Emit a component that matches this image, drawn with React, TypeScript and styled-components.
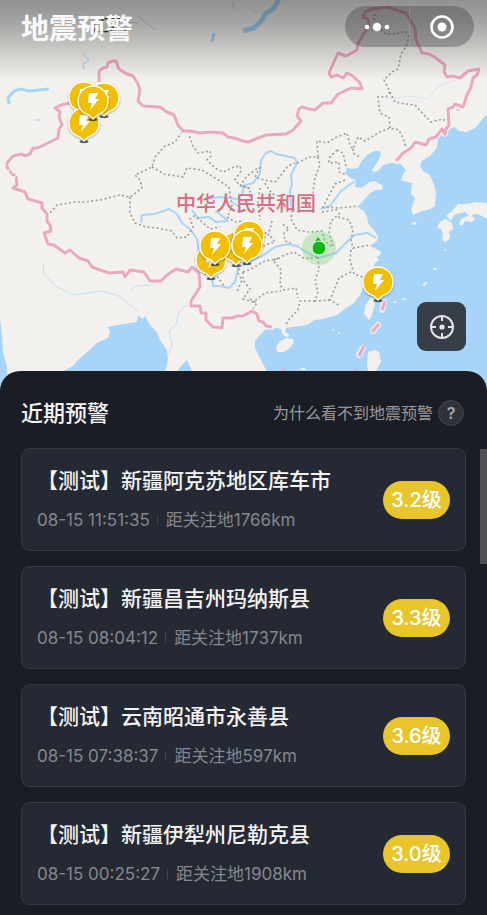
import React from "react";
import styled, { createGlobalStyle } from "styled-components";

const GlobalStyle = createGlobalStyle`
  * { box-sizing: border-box; }
  html, body { margin: 0; background: #1a1d24; }
  body { font-family: Inter, "Noto Sans CJK SC", sans-serif; }
  button, a { font: inherit; color: inherit; text-decoration: none; }
  button { border: 0; padding: 0; background: none; cursor: pointer; }
`;

const Page = styled.main`
  min-height: 100vh;
  display: flex;
  flex-direction: column;
  overflow: hidden;
`;

const MapArea = styled.section`
  position: relative;
  height: 391px;
  overflow: hidden;
  background: #f2f1ee;
`;

const MapDrawing = styled.svg`
  display: block;
  width: 100%;
  height: 400px;
`;

const TopBar = styled.header`
  position: absolute;
  inset: 0 0 auto;
  height: 80px;
  padding: 6px 13px 0 21px;
  display: flex;
  align-items: flex-start;
  justify-content: space-between;
  background: linear-gradient(rgba(0, 0, 0, 0.4), rgba(0, 0, 0, 0.31) 30%, rgba(0, 0, 0, 0));
`;

const AppTitle = styled.h1`
  margin: 3px 0 0;
  color: #fafafa;
  font-size: 28px;
  line-height: 40px;
  font-weight: 700;
`;

const Capsule = styled.div`
  width: 129px;
  height: 41px;
  display: flex;
  border-radius: 21px;
  background: rgba(60, 60, 60, 0.36);
`;

const CapsuleButton = styled.button`
  flex: 1;
  display: grid;
  place-items: center;
  & + & { border-left: 1px solid rgba(255, 255, 255, 0.12); }
`;

const LocateButton = styled.button`
  position: absolute;
  right: 21px;
  top: 302px;
  width: 49px;
  height: 49px;
  display: grid;
  place-items: center;
  border-radius: 9px;
  background: #373e47;
`;

const Panel = styled.section`
  position: relative;
  flex: 1;
  margin-top: -20px;
  padding: 21px 21px 10px;
  border-radius: 20px 20px 0 0;
  background: #1a1d24;
`;

const ScrollThumb = styled.div`
  position: absolute;
  top: 78px;
  right: 0;
  width: 7px;
  height: 115px;
  background: #4e5055;
`;

const PanelHead = styled.div`
  display: flex;
  align-items: center;
  justify-content: space-between;
  height: 42px;
`;

const PanelTitle = styled.h2`
  margin: 0;
  color: #f4f4f5;
  font-size: 22px;
  line-height: 32px;
  font-weight: 500;
`;

const HelpLink = styled.a`
  display: flex;
  align-items: center;
  gap: 5px;
  margin-right: 2px;
  color: #97999d;
  font-size: 16px;
  line-height: 24px;
`;

const HelpMark = styled.span`
  width: 26px;
  height: 26px;
  display: grid;
  place-items: center;
  border: 1px solid #44474d;
  border-radius: 50%;
  background: #303339;
  color: #a5a7aa;
  font-weight: 600;
`;

const AlertList = styled.ul`
  list-style: none;
  margin: 14px 0 0;
  padding: 0;
  display: flex;
  flex-direction: column;
  gap: 15px;
`;

const AlertCard = styled.li`
  height: 103px;
  padding: 0 15px;
  display: flex;
  align-items: center;
  justify-content: space-between;
  border: 1px solid #363942;
  border-radius: 9px;
  background: #252934;
`;

const AlertText = styled.div`
  display: flex;
  flex-direction: column;
  gap: 10px;
`;

const Place = styled.h3`
  margin: 0;
  color: #f4f4f5;
  font-size: 21px;
  line-height: 30px;
  font-weight: 500;
`;

const Details = styled.div`
  display: flex;
  align-items: center;
  color: #85878c;
  font-size: 17px;
  line-height: 28px;
`;

const Divider = styled.span`
  width: 1px;
  height: 10px;
  margin: 0 8px 0 7px;
  background: #41454e;
`;

const Level = styled.span`
  width: 67px;
  height: 38px;
  display: grid;
  place-items: center;
  border-radius: 19px;
  background: #e9c52c;
  color: #fff;
  font-size: 20px;
  line-height: 28px;
  font-weight: 500;
`;

const alerts = [
  { place: "【测试】新疆阿克苏地区库车市", time: "08-15 11:51:35", distance: "距关注地1766km", level: "3.2级" },
  { place: "【测试】新疆昌吉州玛纳斯县", time: "08-15 08:04:12", distance: "距关注地1737km", level: "3.3级" },
  { place: "【测试】云南昭通市永善县", time: "08-15 07:38:37", distance: "距关注地597km", level: "3.6级" },
  { place: "【测试】新疆伊犁州尼勒克县", time: "08-15 00:25:27", distance: "距关注地1908km", level: "3.0级" },
];

const seas = [
  "M487 114L482 120 475 128 466 132 459 131 454 127 448 130 438 138 437 148 430 156 422 161 420 166 423 171 429 174 433 182 436 192 435 206 430 209 423 211 413 215 411 209 415 198 411 194 412 183 407 182 401 180 403 174 406 171 402 165 395 162 383 165 378 171 373 172 372 170 377 163 381 154 379 151 374 151 367 155 361 162 358 168 353 169 347 168 345 173 350 178 356 180 355 187 361 188 365 186 369 182 375 181 379 184 383 185 382 190 376 190 370 193 365 199 357 207 364 211 367 217 368 223 374 230 378 237 377 241 370 246 380 251 381 254 377 257 379 260 375 263 372 273 366 278 364 286 360 295 354 303 346 308 337 315 330 317 323 319 315 320 307 325 300 326 293 327 286 328 285 332 290 335 287 337 283 335 281 329 273 327 266 329 260 335 255 341 255 348 266 370 276 400H487Z",
  "M60 373L73 366 77 361 97 343 108 338 110 331 108 327 123 324 137 322 138 315 142 319 145 316 150 325 157 332 160 340 167 350 168 360 165 372V400H50Z",
  "M0 318L2 336 3 352 7 367V400H0Z",
  "M176 373L180 367 187 360 190 367 195 376 187 400Z",
];
const islands = [
  "M276 347L280 341 286 338 293 339 294 342 290 348 284 352 277 352Z",
  "M371 297L374 299 375 305 371 317 369 320 364 314 365 306Z",
  "M368 352L375 350 379 352 381 362 376 371 379 384 370 380 367 366Z",
  "M437 228L440 222 445 219 452 223 453 229 449 232 450 238 446 242 442 240 443 234 441 229Z",
  "M446 216L453 210 458 204 466 204 476 202 487 203V219L480 215 474 214 470 217 465 212 454 215 451 221Z",
  "M459 224L462 218 471 215 475 219 472 222 465 221 462 226Z",
  "M411 224L414 222 417 222 415 225Z",
];
const border = [
  "M99 82L99 71 103 68 107 67 108 63 113 61 116 61 119 69 125 73 133 76 138 84 140 90 138 101 143 106 160 107 167 112 174 115 178 125 183 131 190 131 200 133 211 132 223 133 228 137 234 138 243 141 248 142 266 135 286 134 293 130 301 121 297 116 299 109 302 107 309 109 315 110 323 103 331 103 338 94 351 88 362 89 360 83 353 76 347 73 343 78 337 75 331 77 329 73 338 53 346 56 357 50 358 44 369 25 368 19 363 17 365 12 372 9 388 7 399 11 406 13 410 20 415 28 416 40 422 53 429 54 436 58 445 65 444 72 447 77 453 76 460 78 468 71 479 69 477 75 473 78 471 87 467 95 463 107 455 104 453 107 448 109 449 125 446 129 445 134 442 129 436 137 429 139 426 145 415 142 411 148 403 153 396 161",
  "M70 103L61 105 55 108 60 112 59 117 62 125 59 129 58 138 38 148 33 148 30 154 25 156 22 154 13 156 7 163 7 167 11 173 16 177 17 185 13 188 25 192 28 199 42 203 42 208 47 214 47 221 50 225 51 231 44 233 48 244 54 245 65 253 70 250 79 258 88 261 92 267 100 270 109 273 123 272 125 277 130 270 144 272 150 281 161 281 167 275 176 269 188 272 192 267 199 273 200 287 191 301 191 306 200 306 201 313 206 313 206 320 213 327 222 328 223 318 232 318 237 316 243 316 252 311 257 314 259 321 263 322 266 326 272 327",
];
const provinces = [
  "M182 132L175 142 165 146 155 157 152 167 135 175 140 180 142 188 130 197 120 195 100 200 85 202 75 202 57 205 50 213",
  "M130 197L130 213 135 223 146 227 157 228 172 231 177 238 187 237 193 227 190 219 194 216 200 220 210 229 220 227",
  "M152 167L164 174 183 177 187 168 202 170 215 178 229 187 232 207 227 217 235 222 244 221",
  "M188 132L193 146 198 153 210 151 211 156 207 160 215 168 223 172 234 167 240 166 241 171 235 180 241 186 250 188",
  "M297 163L309 157 318 157 317 141 327 143 335 138 347 133 350 145 353 149 358 137 365 141 380 132 390 128 399 130 403 138 406 147",
  "M390 128L389 117 380 113 378 97 386 97 390 92 384 80 392 72 398 69 401 54 406 47 409 37 405 31 396 34 386 34 377 26 374 18 376 11",
  "M390 92L395 102 406 104 415 105 424 115 431 122 443 119 448 124",
  "M318 157L320 165 315 177 313 193M353 149L353 153 361 158",
  "M260 167L255 177 264 180 275 182 281 175 288 166 295 163",
  "M337 150L329 158 329 163 339 162 339 172 347 175M337 150L343 153 346 166M345 180L335 184 323 207 340 208 358 206",
  "M240 186L247 176 258 168M243 186L250 189 250 198M260 188L258 202 260 220M265 183L269 190 275 196",
  "M293 206L291 219 297 230 309 232 322 231 325 241 331 246M322 212L340 209M340 213L331 221 329 232 333 246M338 217L349 220 353 230 351 240 353 248 370 245",
  "M351 250L350 260 354 274 363 277M351 272L339 278 335 288 330 300 340 306",
  "M318 257L319 269 315 281 318 292 315 301 330 300M315 301L300 301 298 310 290 318 285 326",
  "M280 258L273 260 281 270 280 285 284 290 296 288 298 298M282 256L294 252 305 259 318 257",
  "M243 272L251 269 265 261 280 258M243 272L243 280 250 289 243 299 253 302 265 293 281 291M250 299L257 303 252 310",
  "M248 234L261 240 269 234 275 242 265 245 258 254 244 265M283 224L289 229 284 233 285 241 291 243M272 221L270 230 264 234M230 260L241 262 238 273 242 280 237 292M192 268L207 275 217 276 225 287",
];
const rivers = [
  "M141 223L142 215 155 214 169 209 177 214 182 223 191 230 197 239 199 255 205 270 212 278 213 286 220 286 229 288 235 282 238 268 247 263 262 256 275 247 288 244 297 246 306 252 318 258 336 253 345 244 354 235 368 233 376 238",
  "M243 193L243 186 253 183 260 174 261 160 266 153 271 151 276 154 295 158 297 163 291 175 292 184 290 191 291 207M321 209L330 206 341 191 355 181",
  "M192 210L198 218 209 217 216 222 228 221 220 214 215 211M210 199L219 197 238 199 244 191M232 202L241 208",
];

const pins = [
  [84, 97], [104, 98], [84, 123], [93, 101],
  [211, 260], [236, 247], [249, 236], [215, 246], [247, 245], [378, 282],
];

function Pin({ x, y }: { x: number; y: number }) {
  return (
    <g transform={`translate(${x} ${y})`}>
      <ellipse cx="0" cy="18.5" rx="4.5" ry="1.6" fill="#333e49" opacity=".8" />
      <path
        d="M0 18L-4 14C-11 12-15 7-15 0A15 15 0 0 1 15 0C15 7 11 12 4 14Z"
        fill="#f0bf06"
        stroke="#fffdf4"
        strokeWidth="1.3"
        filter="url(#pinShadow)"
      />
      <path d="M-4-8H5L2-2H6L-3 9-1 2H-5Z" fill="#fff" />
    </g>
  );
}

function MapPicture() {
  return (
    <MapDrawing viewBox="0 0 487 400" preserveAspectRatio="xMidYMin slice" role="img" aria-label="地震预警地图">
      <defs>
        <filter id="pinShadow" x="-30%" y="-30%" width="160%" height="170%">
          <feDropShadow dx="0" dy="1" stdDeviation="1" floodOpacity=".35" />
        </filter>
      </defs>
      <g fill="#a8d4f7">{seas.map((d) => <path key={d} d={d} />)}</g>
      <g fill="#f2f1ee">{islands.map((d) => <path key={d} d={d} />)}</g>
      <g fill="none" stroke="#a8d4f7" strokeWidth="2" strokeLinejoin="round">
        {rivers.map((d) => <path key={d} d={d} />)}
        <path d="M9 104L8 98 14 91 21 89 29 91 49 89" strokeWidth="3" />
        <path d="M34 120H41M83 55L89 60 83 64 84 70" strokeWidth="1" />
        <path d="M243 31L254 28 262 20 266 13 273 9 279 0" strokeWidth="5" />
        <path d="M214 33L212 42" strokeWidth="3" />
        <path d="M43 264L44 274 57 287 73 295 101 291 117 295 129 304 138 311M131 290L136 286 151 285 166 280M189 303L179 312 176 325 169 331 172 344 169 355" strokeWidth="1" opacity=".65" />
        <path d="M253 9L257 14M121 25L124 22 138 23M138 16L155 30M233 2V9" strokeWidth="1" />
        <path d="M388 98H395L410 96 428 99 436 88 449 82 457 80" strokeWidth="1" opacity=".4" />
      </g>
      <ellipse cx="458" cy="110" rx="2" ry="1" fill="#a8d4f7" />
      <g fill="#f2f1ee">
        <circle cx="333" cy="330" r="1" /><circle cx="339" cy="333" r="1" /><ellipse cx="404" cy="299" rx="2" ry="1" />
        <ellipse cx="395" cy="302" rx="2" ry="1" /><ellipse cx="425" cy="284" rx="3" ry="1" transform="rotate(-45 425 284)" />
        <ellipse cx="435" cy="269" rx="2" ry="1" /><circle cx="445" cy="250" r="1" /><ellipse cx="303" cy="369" rx="3" ry="1" />
      </g>
      <g fill="none" stroke="#9d9c9b" strokeWidth="1.6" strokeDasharray="2 2.5">
        {provinces.map((d) => <path key={d} d={d} />)}
      </g>
      <g fill="none" stroke="#fbf3f4" strokeWidth="6" strokeLinejoin="round" strokeLinecap="round" opacity=".8">
        {border.map((d) => <path key={d} d={d} />)}
        <path d="M384 302L382 310M378 325L373 331M363 348L359 355" />
      </g>
      <g fill="none" stroke="#e9a9be" strokeWidth="3" strokeLinejoin="round">
        {border.map((d) => <path key={d} d={d} />)}
        <path d="M385 301L382 310M379 324L372 332M364 346L359 356M282 369L286 373M357 369L353 375" />
      </g>
      <path d="M8 170L12 174M14 176L16 179" stroke="#f2f1ee" strokeWidth="2" strokeDasharray="2 3" />
      <text x="91" y="32" fontSize="18" fill="#3e4145">江乙</text>
      <text x="176" y="211" fontSize="20" fontWeight="500" fill="#d76d82">中华人民共和国</text>
      <circle cx="319" cy="248" r="17" fill="#65d35c" opacity=".3" />
      <path d="M315 242L318 237 321 241Z" fill="#0db90d" />
      <circle cx="319" cy="248" r="7" fill="#0db90d" stroke="#eefae9" />
      {pins.map(([x, y]) => <Pin key={`${x}-${y}`} x={x} y={y} />)}
    </MapDrawing>
  );
}

export default function App() {
  return (
    <Page>
      <GlobalStyle />
      <MapArea>
        <MapPicture />
        <TopBar>
          <AppTitle>地震预警</AppTitle>
          <Capsule>
            <CapsuleButton aria-label="更多">
              <svg width="26" height="10" viewBox="0 0 26 10" fill="#fff">
                <circle cx="3" cy="5" r="2.3" /><circle cx="13" cy="5" r="4.2" /><circle cx="23" cy="5" r="2.3" />
              </svg>
            </CapsuleButton>
            <CapsuleButton aria-label="关闭">
              <svg width="26" height="26" viewBox="0 0 26 26">
                <circle cx="13" cy="13" r="10.5" fill="none" stroke="#fff" strokeWidth="2.6" />
                <circle cx="13" cy="13" r="4.5" fill="#fff" />
              </svg>
            </CapsuleButton>
          </Capsule>
        </TopBar>
        <LocateButton aria-label="定位">
          <svg width="26" height="26" viewBox="0 0 26 26" fill="none" stroke="#e3e5e7" strokeWidth="2">
            <circle cx="13" cy="13" r="11" />
            <path d="M13 2V7M13 19V24M2 13H7M19 13H24" />
            <circle cx="13" cy="13" r="2.6" fill="#e3e5e7" stroke="none" />
          </svg>
        </LocateButton>
      </MapArea>
      <Panel>
        <PanelHead>
          <PanelTitle>近期预警</PanelTitle>
          <HelpLink href="#help">
            为什么看不到地震预警
            <HelpMark>?</HelpMark>
          </HelpLink>
        </PanelHead>
        <AlertList>
          {alerts.map((a) => (
            <AlertCard key={a.time}>
              <AlertText>
                <Place>{a.place}</Place>
                <Details>
                  <time>{a.time}</time>
                  <Divider />
                  <span>{a.distance}</span>
                </Details>
              </AlertText>
              <Level>{a.level}</Level>
            </AlertCard>
          ))}
        </AlertList>
        <ScrollThumb />
      </Panel>
    </Page>
  );
}
